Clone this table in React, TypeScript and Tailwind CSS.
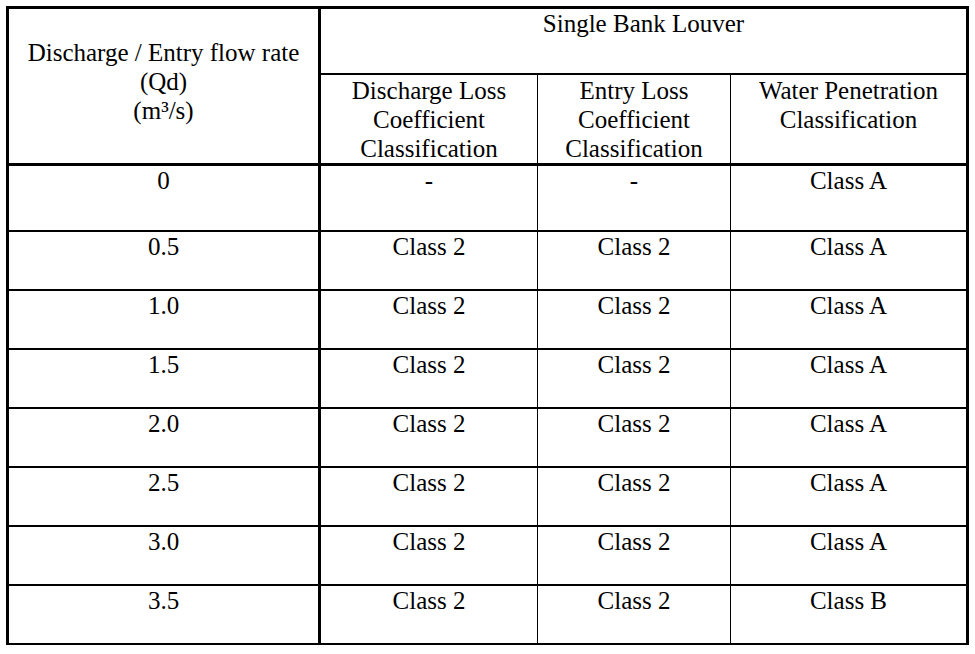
import React from "react";

const rows: [string, string, string, string][] = [
  ["0.5", "Class 2", "Class 2", "Class A"],
  ["1.0", "Class 2", "Class 2", "Class A"],
  ["1.5", "Class 2", "Class 2", "Class A"],
  ["2.0", "Class 2", "Class 2", "Class A"],
  ["2.5", "Class 2", "Class 2", "Class A"],
  ["3.0", "Class 2", "Class 2", "Class A"],
  ["3.5", "Class 2", "Class 2", "Class B"],
];

function Row({ cells, first, last }: { cells: [string, string, string, string]; first?: boolean; last?: boolean }) {
  return (
    <div className={`flex ${first ? "h-[66px]" : last ? "h-[57px]" : "h-[59px]"} ${last ? "" : "border-b-2 border-black"}`}>
      <div className="w-[312px] shrink-0 border-r-[3px] border-black">{cells[0]}</div>
      <div className="w-[217px] shrink-0 border-r border-black">{cells[1]}</div>
      <div className="w-[193px] shrink-0 border-r border-black">{cells[2]}</div>
      <div className="flex-1">{cells[3]}</div>
    </div>
  );
}

export default function App() {
  return (
    <div className="w-[975px] h-[654px] bg-white pt-[6px] pl-[6px]">
      <div
        className="w-[963px] border-[3px] border-b-2 border-black text-center text-black text-[25px] leading-[29px]"
        style={{ fontFamily: '"Liberation Serif", "Times New Roman", serif' }}
      >
        {/* Header */}
        <div className="flex h-[157px] border-b-[3px] border-black">
          <div className="w-[312px] shrink-0 border-r-[3px] border-black pt-[29px]">
            <div>Discharge / Entry flow rate</div>
            <div>(Qd)</div>
            <div>(m³/s)</div>
          </div>
          <div className="flex-1 flex flex-col">
            <div className="h-[66px] border-b-2 border-black">Single Bank Louver</div>
            <div className="flex flex-1">
              <div className="w-[217px] shrink-0 border-r border-black pt-[1px]">
                Discharge Loss
                <br />
                Coefficient
                <br />
                Classification
              </div>
              <div className="w-[193px] shrink-0 border-r border-black pt-[1px]">
                Entry Loss
                <br />
                Coefficient
                <br />
                Classification
              </div>
              <div className="flex-1 pt-[1px]">
                Water Penetration
                <br />
                Classification
              </div>
            </div>
          </div>
        </div>
        <Row cells={["0", "-", "-", "Class A"]} first />
        {rows.map((r, i) => (
          <Row key={r[0]} cells={r} last={i === rows.length - 1} />
        ))}
      </div>
    </div>
  );
}
